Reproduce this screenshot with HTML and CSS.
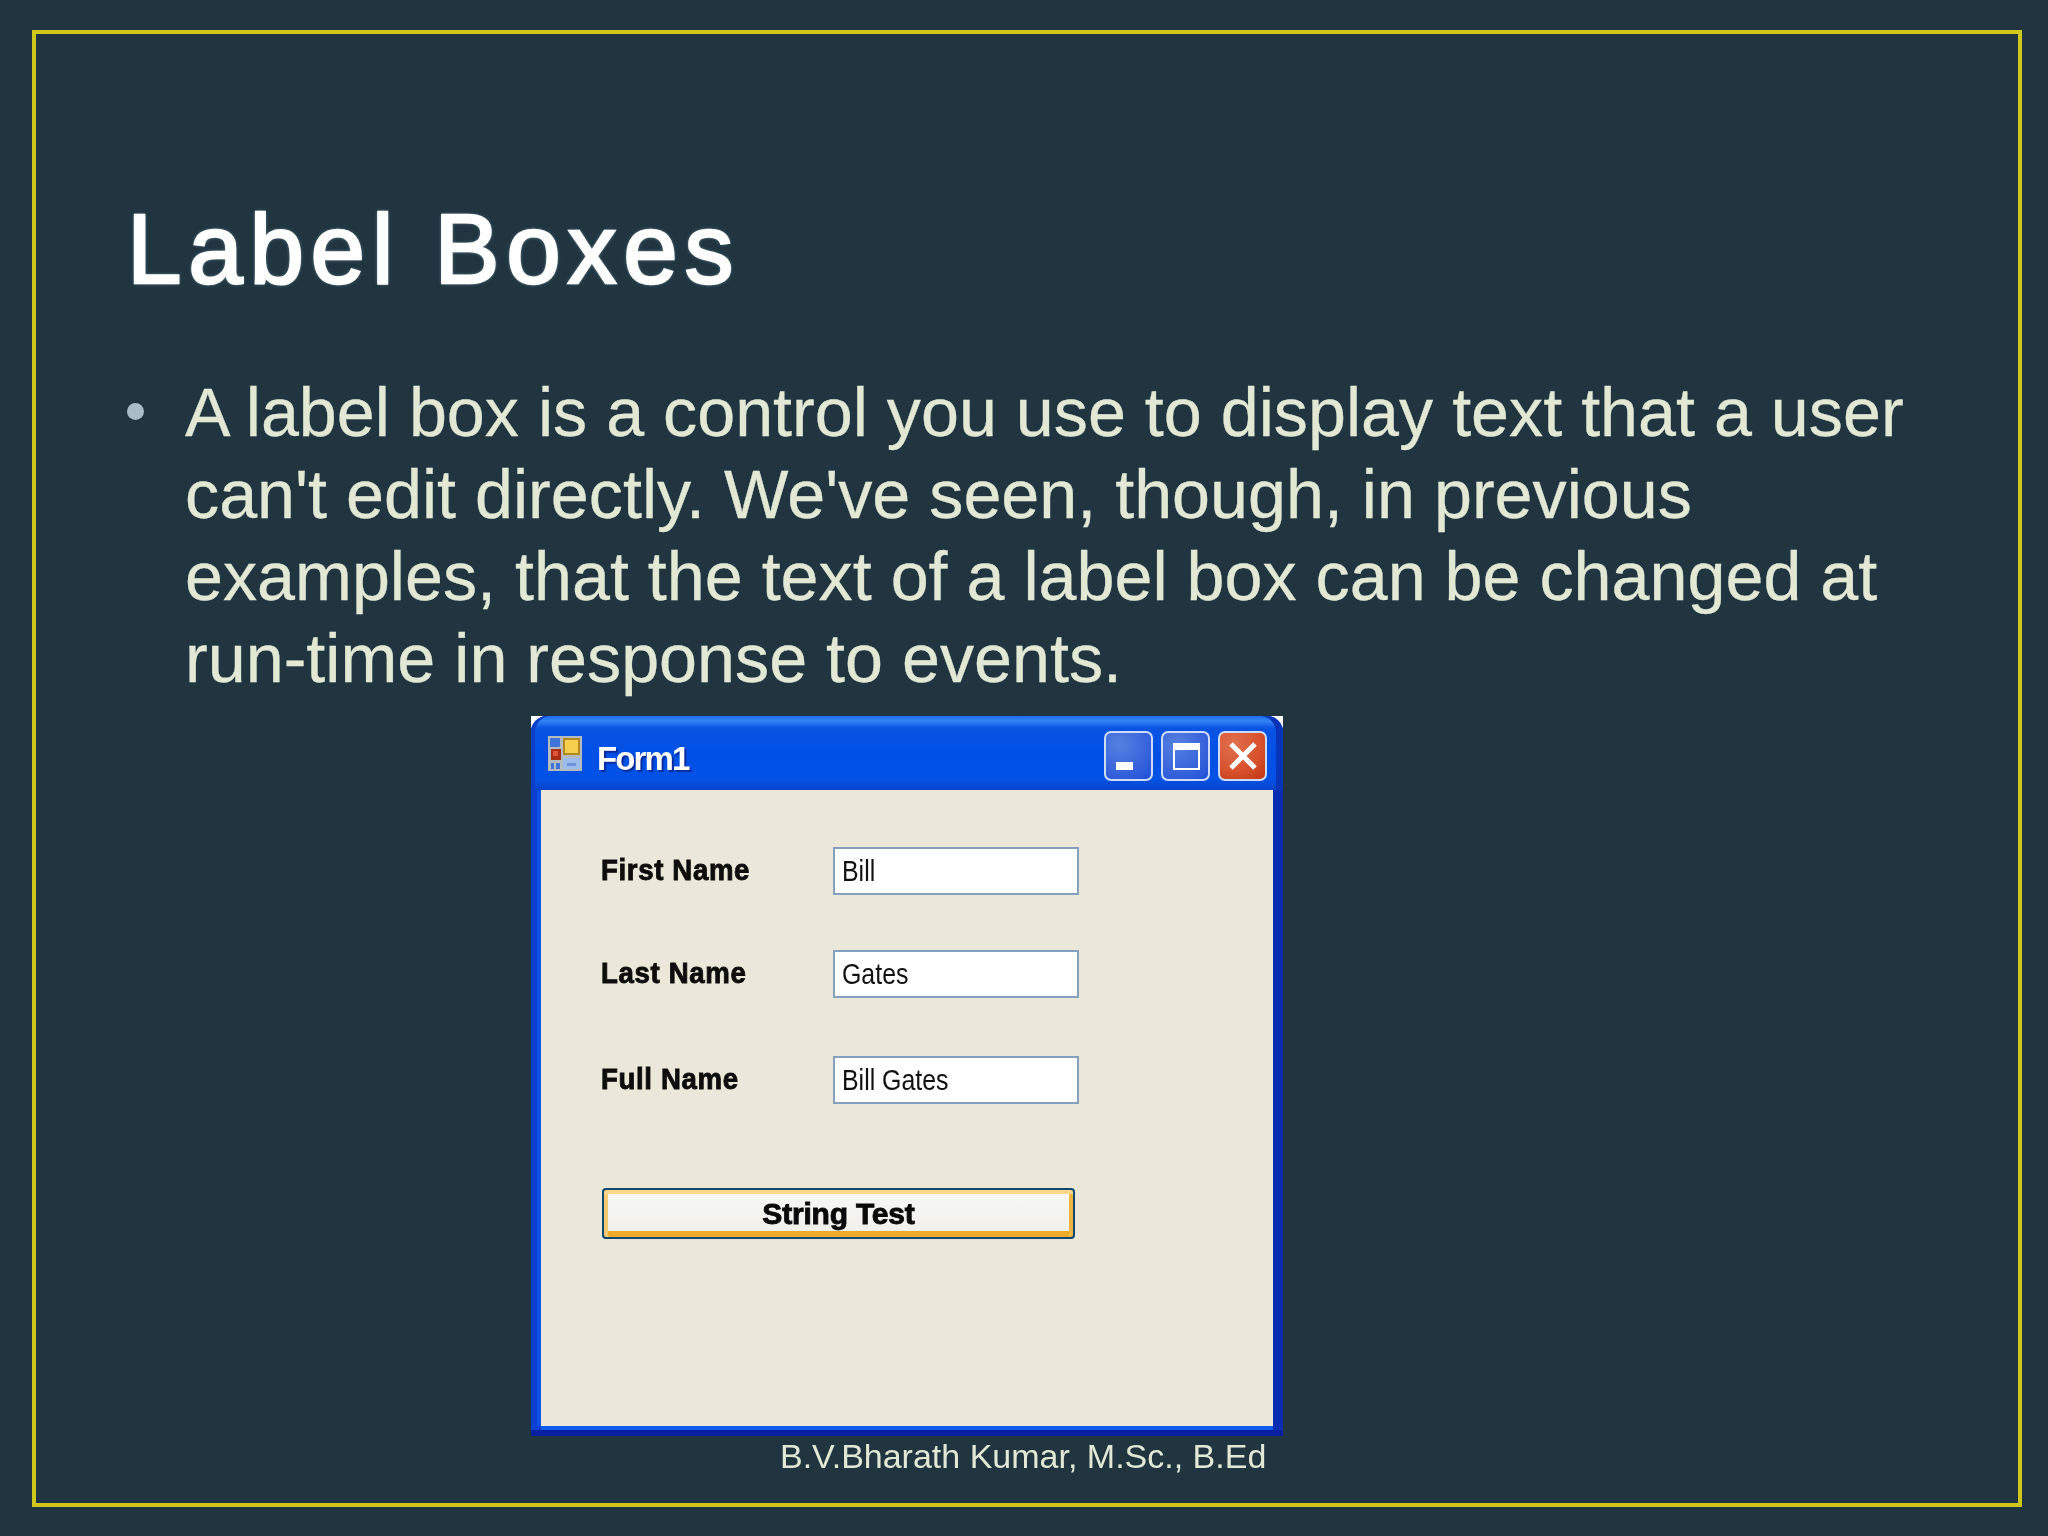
FILE: index.html
```html
<!DOCTYPE html>
<html lang="en">
<head>
<meta charset="utf-8">
<title>Label Boxes</title>
<link rel="stylesheet" href="styles.css">
</head>
<body>
<main class="slide">
  <section class="frame">
    <h1 class="title">Label Boxes</h1>
    <div class="point">
      <span class="dot"></span>
      <p class="point-text">A label box is a control you use to display text that a user can't edit directly. We've seen, though, in previous examples, that the text of a label box can be changed at run-time in response to events.</p>
    </div>
    <div class="window">
      <div class="win">
        <header class="titlebar">
          <svg class="app-icon" viewBox="0 0 34 35" aria-hidden="true">
            <rect width="34" height="35" fill="#b4bcc0"/>
            <rect x="2" y="2" width="10" height="9" fill="#3f74d8"/>
            <rect x="15" y="2" width="17" height="17" fill="#b08a20"/>
            <rect x="17" y="4" width="13" height="13" fill="#f7cf4e"/>
            <rect x="3" y="13" width="10" height="11" fill="#a82f16"/>
            <rect x="5" y="15" width="5" height="5" fill="#e0563a"/>
            <rect x="3" y="27" width="3" height="6" fill="#3f74d8"/>
            <rect x="8" y="27" width="4" height="6" fill="#3f74d8"/>
            <rect x="15" y="22" width="17" height="11" fill="#9dbcec"/>
            <rect x="19" y="27" width="9" height="3" fill="#6d94dc"/>
          </svg>
          <span class="win-title">Form1</span>
          <div class="win-buttons">
            <span class="wbtn">
              <svg viewBox="0 0 49 50" aria-hidden="true"><rect x="12" y="31" width="17" height="8" fill="#fff"/></svg>
            </span>
            <span class="wbtn">
              <svg viewBox="0 0 49 50" aria-hidden="true"><path d="M13 13h25v25h-25z" fill="none" stroke="#fff" stroke-width="2"/><rect x="12" y="12" width="27" height="7" fill="#fff"/></svg>
            </span>
            <span class="wbtn wbtn-close">
              <svg viewBox="0 0 49 50" aria-hidden="true"><path d="M13 13l24 24M37 13l-24 24" stroke="#fff" stroke-width="5" fill="none"/></svg>
            </span>
          </div>
        </header>
        <div class="client">
          <div class="fields">
            <span class="field-label"><span class="squeeze-bold">First Name</span></span><span class="textbox"><span class="squeeze">Bill</span></span>
            <span class="field-label"><span class="squeeze-bold">Last Name</span></span><span class="textbox"><span class="squeeze">Gates</span></span>
            <span class="field-label"><span class="squeeze-bold">Full Name</span></span><span class="textbox"><span class="squeeze">Bill Gates</span></span>
          </div>
          <div class="push"><span>String Test</span></div>
        </div>
      </div>
    </div>
    <footer class="credit">B.V.Bharath Kumar, M.Sc., B.Ed</footer>
  </section>
</main>
</body>
</html>
```
FILE: styles.css
```css
* { box-sizing: border-box; }
html, body { margin: 0; padding: 0; background: #203540; }
.slide {
  width: 2048px;
  height: 1536px;
  padding: 30px 26px 29px 32px;
  background: #203540;
  overflow: hidden;
  font-family: "Liberation Sans", Arial, sans-serif;
}
.frame {
  height: 100%;
  border: 4px solid #d0c71c;
  padding: 165px 0 0 91px;
  filter: blur(.45px);
}
.title {
  margin: 0;
  font-size: 98px;
  line-height: 100px;
  font-weight: 400;
  letter-spacing: 6.7px;
  color: #fff;
  -webkit-text-stroke: 2.4px #fff;
  text-shadow: 0 0 4px #6a8696, 0 0 3px #6a8696;
}
.point {
  display: flex;
  align-items: flex-start;
  gap: 41px;
  margin-top: 72px;
}
.dot {
  flex: none;
  width: 17px;
  height: 17px;
  margin-top: 32px;
  border-radius: 50%;
  background: #a9bdc9;
}
.point-text {
  margin: 0;
  width: 1770px;
  font-size: 68.25px;
  line-height: 82px;
  color: #e3e8d5;
  -webkit-text-stroke: .3px #e3e8d5;
}
.window {
  width: 752px;
  height: 720px;
  margin: 17px 0 0 404px;
  background:
    linear-gradient(#fff, #fff) 0 0 / 12px 12px no-repeat,
    linear-gradient(#fff, #fff) 100% 0 / 12px 12px no-repeat;
}
.win {
  height: 100%;
  padding: 0 10px 10px;
  border-radius: 16px 16px 0 0;
  background:
    linear-gradient(#0820a0, #0820a0) 0 100% / 100% 6px no-repeat,
    linear-gradient(90deg, #0c40d0, #0c40d0 50%, #0a2cb0);
}
.titlebar {
  display: flex;
  align-items: center;
  height: 74px;
  margin: 0 -10px;
  padding: 0 16px 0 17px;
  border-radius: 16px 16px 0 0;
  background: linear-gradient(#1f6cf0 0, #3484f6 5px, #0a54e2 12px, #0050e6 50%, #0352e6 85%, #0a44cc 100%);
  box-shadow: inset 4px 0 #0b3fc8, inset -7px 0 #0a34b8;
}
.app-icon {
  flex: none;
  width: 34px;
  height: 35px;
  margin-top: 1px;
}
.win-title {
  margin: 11px 0 0 15px;
  font-size: 33px;
  font-weight: 700;
  letter-spacing: -1.9px;
  color: #fff;
  text-shadow: 2px 2px 1px #0a2c9c;
}
.win-buttons {
  display: flex;
  gap: 8px;
  margin-left: auto;
  margin-top: 6px;
}
.wbtn {
  display: block;
  width: 49px;
  height: 50px;
  border: 2px solid #cfdcf8;
  border-radius: 7px;
  background: radial-gradient(circle at 30% 25%, #5580e0, #3a66dc 55%, #1f4fd8);
}
.wbtn svg {
  display: block;
  width: 49px;
  height: 50px;
  margin: -2px;
}
.wbtn-close {
  background: radial-gradient(circle at 30% 25%, #e0704e, #d8532e 55%, #bf3612);
}
.client {
  height: 636px;
  padding: 57px 0 0 60px;
  background: #ebe7d9;
  box-shadow: -4px 0 #0b50e8, 0 4px #0e5cf0;
}
.fields {
  display: grid;
  grid-template-columns: 232px 246px;
  grid-template-rows: 103px 106px 48px;
}
.field-label {
  margin-top: 4px;
  font-size: 30px;
  line-height: 38px;
  font-weight: 700;
  color: #0d0d0d;
  -webkit-text-stroke: .9px #0d0d0d;
}
.squeeze-bold {
  display: inline-block;
  white-space: nowrap;
  letter-spacing: .7px;
  transform: scaleX(.92);
  transform-origin: left center;
}
.textbox {
  height: 48px;
  padding-left: 7px;
  border: 2px solid #83a0bd;
  background: #fff;
  font-size: 30px;
  line-height: 44px;
  color: #111;
}
.squeeze {
  display: inline-block;
  white-space: nowrap;
  transform: scaleX(.83);
  transform-origin: left center;
}
.push {
  display: flex;
  align-items: center;
  justify-content: center;
  width: 473px;
  height: 51px;
  margin: 84px 0 0 1px;
  border: 2px solid #10476f;
  border-radius: 4px;
  background: linear-gradient(#f8f8f5, #f0efea);
  box-shadow: inset 0 4px #fbd88c, inset 4px 0 #f7cb72, inset -4px 0 #f0b440, inset 0 -6px #eeab2a;
}
.push span {
  font-size: 30px;
  font-weight: 700;
  letter-spacing: -.2px;
  color: #0a0a0a;
  -webkit-text-stroke: .9px #0a0a0a;
}
.credit {
  margin-left: 653px;
  font-size: 34px;
  line-height: 40px;
  color: #e3e8d5;
}
```
